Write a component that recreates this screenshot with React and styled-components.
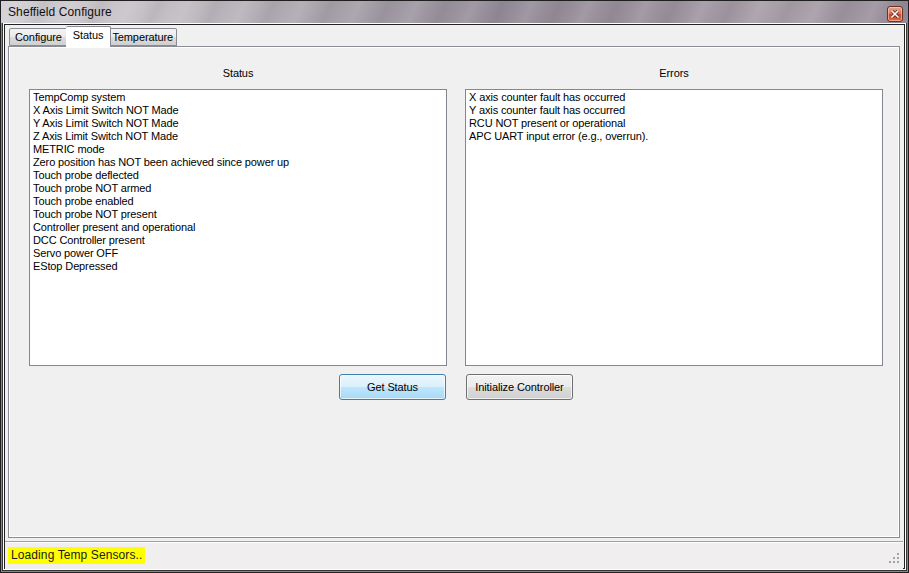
import React from 'react';
import styled, { createGlobalStyle } from 'styled-components';

const GlobalStyle = createGlobalStyle`
  html, body {
    margin: 0;
    padding: 0;
    background: #ffffff;
  }
  * {
    box-sizing: border-box;
  }
`;

const Window = styled.div`
  width: 909px;
  height: 573px;
  display: flex;
  flex-direction: column;
  border: 1px solid #1f1f1f;
  background: #343434;
  box-shadow: inset 0 0 0 1px #8a8a8a;
  font-family: "Liberation Sans", Arial, sans-serif;
  color: #000;
  overflow: hidden;
`;

const TitleBar = styled.div`
  height: 22px;
  flex: none;
  display: flex;
  align-items: center;
  justify-content: space-between;
  padding: 0 5px 0 7px;
  background:
    repeating-linear-gradient(115deg, rgba(255,255,255,0) 0px, rgba(255,255,255,0.10) 14px, rgba(255,255,255,0) 28px, rgba(0,0,0,0.05) 40px, rgba(255,255,255,0) 52px),
    linear-gradient(90deg, #d3d0d5 0%, #c3bfc5 18%, #a59fa8 38%, #948c98 55%, #9a909c 72%, #a9a0aa 86%, #958b98 100%);
`;

const Title = styled.span`
  font-size: 12px;
  color: #101010;
  letter-spacing: 0.1px;
`;

const CloseButton = styled.div`
  width: 16px;
  height: 16px;
  margin-top: 3px;
  border: 1px solid #6b3026;
  border-radius: 3px;
  background: linear-gradient(180deg, #eea58a 0%, #df7355 45%, #c9472a 55%, #da6a45 100%);
  box-shadow: inset 0 0 0 1px rgba(255, 220, 200, 0.55);
  display: flex;
  align-items: center;
  justify-content: center;
`;

const Client = styled.div`
  flex: 1;
  margin: 0 2px 2px 2px;
  display: flex;
  flex-direction: column;
  background: #f0f0f0;
  border: 1px solid #ffffff;
  box-shadow: inset 0 0 0 1px #222222;
  padding: 2px 5px 0 4px;
`;

const TabStrip = styled.div`
  display: flex;
  align-items: flex-end;
  height: 20px;
  padding-left: 1px;
  position: relative;
  z-index: 1;
`;

const Tab = styled.div`
  font-size: 11px;
  letter-spacing: -0.1px;
  height: ${(p) => (p.$active ? '21px' : '18px')};
  margin: ${(p) => (p.$active ? '0 -2px -1px -2px' : '0')};
  padding: ${(p) => (p.$active ? '2px 7px 0 7px' : `2px ${p.$pad}px 0 ${p.$pad}px`)};
  border: 1px solid #898c95;
  border-bottom: ${(p) => (p.$active ? 'none' : '1px solid #898c95')};
  background: ${(p) =>
    p.$active ? '#ffffff' : 'linear-gradient(180deg, #f2f2f2 0%, #ebebeb 50%, #dddddd 51%, #cfcfcf 100%)'};
  border-radius: 2px 2px 0 0;
  position: relative;
  z-index: ${(p) => (p.$active ? 2 : 1)};
  & + & {
    border-left: ${(p) => (p.$active ? '1px solid #898c95' : 'none')};
  }
`;

const TabPage = styled.div`
  flex: 1;
  border: 1px solid #898c95;
  box-shadow: inset 0 0 0 1px #ffffff;
  background: #f0f0f0;
  padding: 19px 13px 0 20px;
  display: grid;
  grid-template-columns: 418px 418px;
  grid-template-rows: 14px 277px 26px;
  column-gap: 18px;
  row-gap: 8px;
  align-content: start;
`;

const Caption = styled.div`
  font-size: 11px;
  letter-spacing: -0.1px;
  text-align: center;
  line-height: 14px;
`;

const ListBox = styled.div`
  background: #ffffff;
  border: 1px solid #828790;
  padding: 1px 3px;
  font-size: 11px;
  letter-spacing: -0.12px;
  line-height: 13px;
  margin-top: 1px;
  height: 277px;
`;

const ListItem = styled.div`
  white-space: nowrap;
`;

const Button = styled.button`
  width: 107px;
  height: 26px;
  margin-top: 1px;
  justify-self: ${(p) => p.$align};
  margin-left: ${(p) => (p.$align === 'start' ? '1px' : '0')};
  margin-right: ${(p) => (p.$align === 'end' ? '1px' : '0')};
  font-family: "Liberation Sans", Arial, sans-serif;
  font-size: 11px;
  letter-spacing: -0.1px;
  color: #000;
  border-radius: 3px;
  padding: 0;
  border: 1px solid ${(p) => (p.$focused ? '#3c7fb1' : '#707070')};
  background: ${(p) =>
    p.$focused
      ? 'linear-gradient(180deg, #eaf6fd 0%, #d9f0fc 50%, #bee6fd 51%, #a7d9f5 100%)'
      : 'linear-gradient(180deg, #f2f2f2 0%, #ebebeb 50%, #dddddd 51%, #cfcfcf 100%)'};
  box-shadow: inset 0 0 0 1px rgba(255, 255, 255, 0.7);
`;

const StatusBar = styled.div`
  height: 28px;
  flex: none;
  margin: 3px -3px 0 -3px;
  border-top: 1px solid #a0a0a0;
  box-shadow: inset 0 1px 0 #ffffff;
  background: #f0eeee;
  display: flex;
  align-items: center;
  justify-content: space-between;
  padding: 0 4px 0 3px;
`;

const StatusLabel = styled.span`
  background: #ffff00;
  font-size: 12px;
  line-height: 17px;
  padding: 0 3px;
  color: #1a1a1a;
  letter-spacing: 0.1px;
`;

const statusLines = [
  'TempComp system',
  'X Axis Limit Switch NOT Made',
  'Y Axis Limit Switch NOT Made',
  'Z Axis Limit Switch NOT Made',
  'METRIC mode',
  'Zero position has NOT been achieved since power up',
  'Touch probe deflected',
  'Touch probe NOT armed',
  'Touch probe enabled',
  'Touch probe NOT present',
  'Controller present and operational',
  'DCC Controller present',
  'Servo power OFF',
  'EStop Depressed',
];

const errorLines = [
  'X axis counter fault has occurred',
  'Y axis counter fault has occurred',
  'RCU NOT present or operational',
  'APC UART input error (e.g., overrun).',
];

function SizeGrip() {
  const dots = [
    [10, 0],
    [6, 4],
    [10, 4],
    [2, 8],
    [6, 8],
    [10, 8],
  ];
  return (
    <svg width="12" height="11" viewBox="0 0 12 11" style={{ marginTop: 6 }}>
      {dots.map(([x, y]) => (
        <rect key={`${x}-${y}`} x={x} y={y} width="2" height="2" fill="#a3a3a3" />
      ))}
    </svg>
  );
}

export default function App() {
  return (
    <>
      <GlobalStyle />
      <Window>
        <TitleBar>
          <Title>Sheffield Configure</Title>
          <CloseButton>
            <svg width="8" height="8" viewBox="0 0 8 8">
              <path d="M1 1 L7 7 M7 1 L1 7" stroke="#4a1a12" strokeWidth="3" strokeLinecap="square" />
              <path d="M1 1 L7 7 M7 1 L1 7" stroke="#ffffff" strokeWidth="1.6" strokeLinecap="square" />
            </svg>
          </CloseButton>
        </TitleBar>
        <Client>
          <TabStrip>
            <Tab $pad={5}>Configure</Tab>
            <Tab $active>Status</Tab>
            <Tab $pad={3}>Temperature</Tab>
          </TabStrip>
          <TabPage>
            <Caption>Status</Caption>
            <Caption>Errors</Caption>
            <ListBox>
              {statusLines.map((line) => (
                <ListItem key={line}>{line}</ListItem>
              ))}
            </ListBox>
            <ListBox>
              {errorLines.map((line) => (
                <ListItem key={line}>{line}</ListItem>
              ))}
            </ListBox>
            <Button $align="end" $focused>Get Status</Button>
            <Button $align="start">Initialize Controller</Button>
          </TabPage>
          <StatusBar>
            <StatusLabel>Loading Temp Sensors..</StatusLabel>
            <SizeGrip />
          </StatusBar>
        </Client>
      </Window>
    </>
  );
}
